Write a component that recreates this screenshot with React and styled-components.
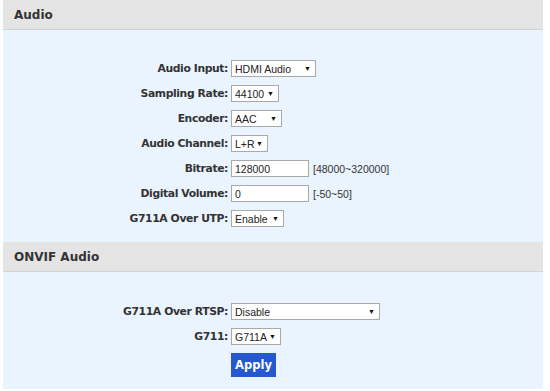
import React from "react";
import styled, { createGlobalStyle } from "styled-components";

const GlobalStyle = createGlobalStyle`
  html, body {
    margin: 0;
    padding: 0;
    background: #ffffff;
  }
  body {
    font-family: "Liberation Sans", Arial, sans-serif;
  }
`;

const Page = styled.div`
  padding: 0 7px 2px 3px;
  width: 540px;
`;

const Section = styled.section`
  background-color: #eaf4fe;
`;

const Header = styled.div`
  height: 29px;
  display: flex;
  align-items: center;
  padding-left: 11px;
  background-color: #e4e4e4;
  border-bottom: 1px solid #cfd3d8;
  font-family: "DejaVu Sans", Verdana, sans-serif;
  font-weight: bold;
  font-size: 12px;
  color: #333;
`;

const Body = styled.div`
  padding: ${(p) => p.$pad};
`;

const Form = styled.div`
  display: grid;
  grid-template-columns: 225px auto;
  column-gap: 3px;
  row-gap: 8px;
  align-items: center;
`;

const Label = styled.label`
  text-align: right;
  font-family: "DejaVu Sans", Verdana, sans-serif;
  font-weight: bold;
  font-size: 10.8px;
  color: #333;
  letter-spacing: -0.4px;
`;

const Field = styled.div`
  display: flex;
  align-items: center;
  gap: 4px;
  height: 17px;
`;

const Select = styled.div`
  box-sizing: border-box;
  width: ${(p) => p.$w}px;
  height: 17px;
  display: flex;
  align-items: center;
  justify-content: space-between;
  padding: 0 4px 0 3px;
  background: #fff;
  border: 1px solid #a9a9a9;
  font-size: 10.5px;
  color: #222;
`;

const Arrow = styled.span`
  font-size: 7px;
  color: #111;
`;

const Input = styled.div`
  box-sizing: border-box;
  width: 78px;
  height: 17px;
  display: flex;
  align-items: center;
  padding: 0 3px;
  background: #fff;
  border: 1px solid #a9a9a9;
  font-size: 10.5px;
  color: #222;
`;

const Hint = styled.span`
  font-size: 10.5px;
  color: #333;
`;

const Button = styled.button`
  grid-column: 2;
  justify-self: start;
  width: 45px;
  height: 24px;
  margin-top: 0;
  padding: 0;
  border: none;
  background-color: #2557cf;
  color: #fff;
  font-family: "DejaVu Sans", Verdana, sans-serif;
  font-weight: bold;
  font-size: 11.5px;
`;

const Drop = ({ w, children }) => (
  <Select $w={w}>
    <span>{children}</span>
    <Arrow>▼</Arrow>
  </Select>
);

const App = () => (
  <Page>
    <GlobalStyle />
    <Section>
      <Header>Audio</Header>
      <Body $pad="30px 0 15px">
        <Form>
          <Label>Audio Input:</Label>
          <Field><Drop w={85}>HDMI Audio</Drop></Field>
          <Label>Sampling Rate:</Label>
          <Field><Drop w={48}>44100</Drop></Field>
          <Label>Encoder:</Label>
          <Field><Drop w={51}>AAC</Drop></Field>
          <Label>Audio Channel:</Label>
          <Field><Drop w={37}>L+R</Drop></Field>
          <Label>Bitrate:</Label>
          <Field><Input>128000</Input><Hint>[48000~320000]</Hint></Field>
          <Label>Digital Volume:</Label>
          <Field><Input>0</Input><Hint>[-50~50]</Hint></Field>
          <Label>G711A Over UTP:</Label>
          <Field><Drop w={53}>Enable</Drop></Field>
        </Form>
      </Body>
      <Header>ONVIF Audio</Header>
      <Body $pad="31px 0 12px">
        <Form>
          <Label>G711A Over RTSP:</Label>
          <Field><Drop w={149}>Disable</Drop></Field>
          <Label>G711:</Label>
          <Field><Drop w={50}>G711A</Drop></Field>
          <Button>Apply</Button>
        </Form>
      </Body>
    </Section>
  </Page>
);

export default App;
